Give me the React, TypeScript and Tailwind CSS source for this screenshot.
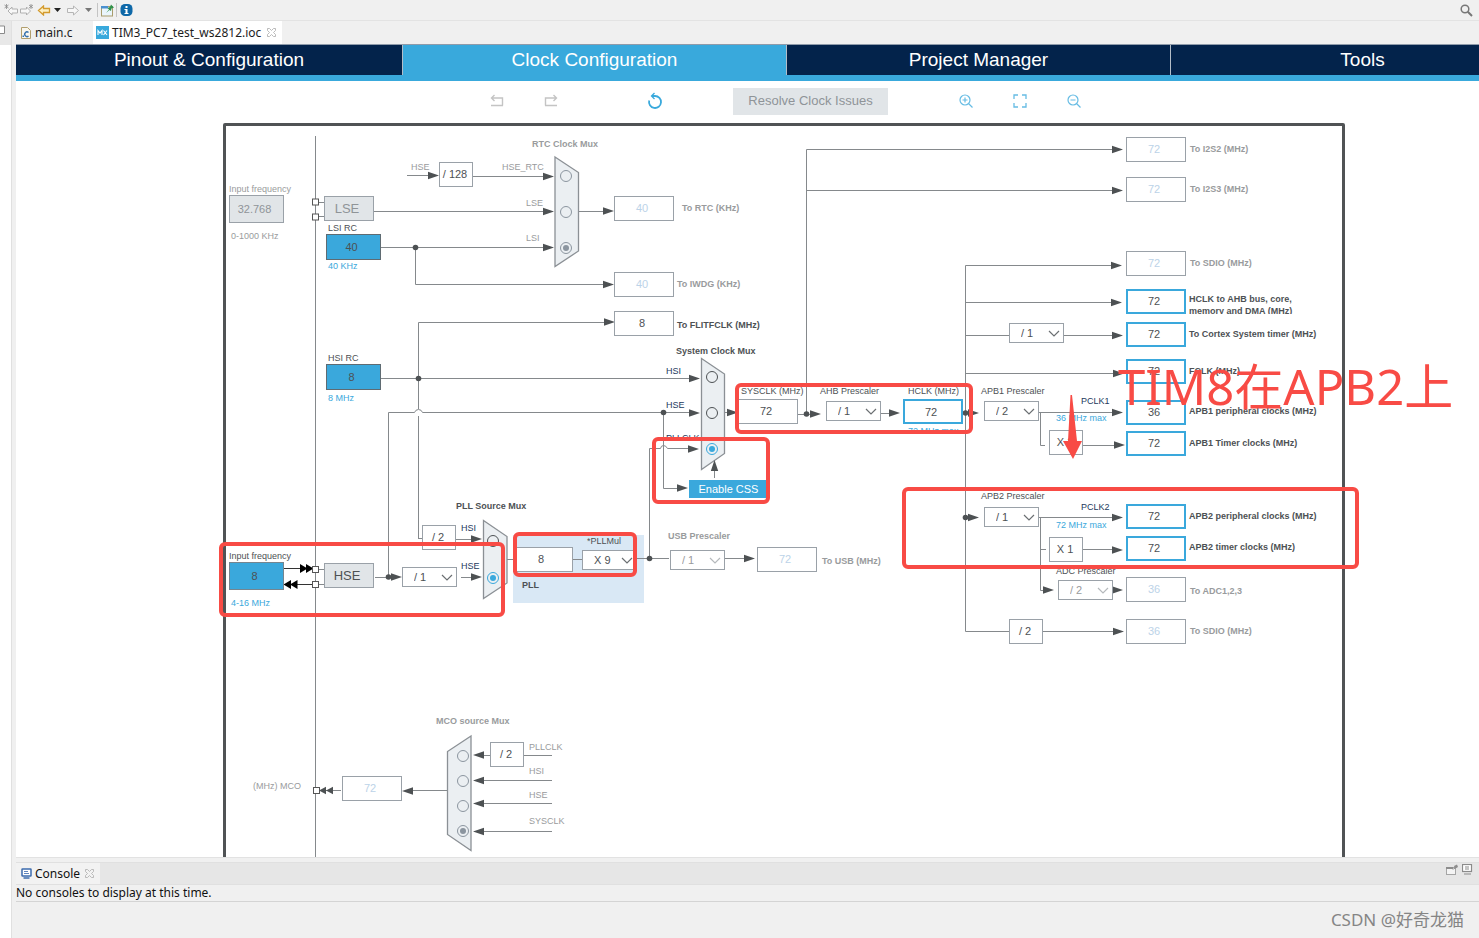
import type { ReactNode } from "react";

/* ---------- Clock sheet data (sheet coordinates) ---------- */

const ORIGIN = { x: 223, y: 123 };
const at = (x: number, y: number, w?: number, h?: number) => ({
  left: x - ORIGIN.x,
  top: y - ORIGIN.y,
  width: w,
  height: h,
});

type Tone = "dark" | "grey" | "navy" | "blue";
const toneClass: Record<Tone, string> = {
  dark: "text-[#4d5154]",
  grey: "text-[#999b9d]",
  navy: "text-[#23395d]",
  blue: "text-[#3aa8dc]",
};

type CaptionData = { x: number; y: number; text: string; tone: Tone; bold?: boolean; htmlFor?: string };

const captions: CaptionData[] = [
  { x: 411, y: 167, text: "HSE", tone: "grey" },
  { x: 502, y: 167, text: "HSE_RTC", tone: "grey", htmlFor: "rtc-hse" },
  { x: 526, y: 203, text: "LSE", tone: "grey", htmlFor: "rtc-lse" },
  { x: 526, y: 238, text: "LSI", tone: "grey", htmlFor: "rtc-lsi" },
  { x: 532, y: 144, text: "RTC Clock Mux", tone: "grey", bold: true },
  { x: 229, y: 189, text: "Input frequency", tone: "grey", htmlFor: "lse-freq" },
  { x: 231, y: 236, text: "0-1000 KHz", tone: "grey" },
  { x: 328, y: 228, text: "LSI RC", tone: "dark", htmlFor: "lsi-rc" },
  { x: 328, y: 266, text: "40 KHz", tone: "blue" },
  { x: 328, y: 358, text: "HSI RC", tone: "dark", htmlFor: "hsi-rc" },
  { x: 328, y: 398, text: "8 MHz", tone: "blue" },
  { x: 229, y: 556, text: "Input frequency", tone: "dark", htmlFor: "hse-freq" },
  { x: 231, y: 603, text: "4-16 MHz", tone: "blue" },
  { x: 682, y: 208, text: "To RTC (KHz)", tone: "grey", bold: true, htmlFor: "out-rtc" },
  { x: 677, y: 284, text: "To IWDG (KHz)", tone: "grey", bold: true, htmlFor: "out-iwdg" },
  { x: 677, y: 325, text: "To FLITFCLK (MHz)", tone: "dark", bold: true, htmlFor: "out-flit" },
  { x: 676, y: 351, text: "System Clock Mux", tone: "dark", bold: true },
  { x: 666, y: 371, text: "HSI", tone: "navy", htmlFor: "sys-hsi" },
  { x: 666, y: 405, text: "HSE", tone: "navy", htmlFor: "sys-hse" },
  { x: 666, y: 438, text: "PLLCLK", tone: "navy", htmlFor: "sys-pll" },
  { x: 741, y: 391, text: "SYSCLK (MHz)", tone: "dark", htmlFor: "sysclk" },
  { x: 820, y: 391, text: "AHB Prescaler", tone: "dark", htmlFor: "ahb" },
  { x: 908, y: 391, text: "HCLK (MHz)", tone: "dark", htmlFor: "hclk" },
  { x: 908, y: 431, text: "72 MHz max", tone: "blue" },
  { x: 981, y: 391, text: "APB1 Prescaler", tone: "dark", htmlFor: "apb1" },
  { x: 1081, y: 401, text: "PCLK1", tone: "navy" },
  { x: 1056, y: 418, text: "36 MHz max", tone: "blue" },
  { x: 981, y: 496, text: "APB2 Prescaler", tone: "dark", htmlFor: "apb2" },
  { x: 1081, y: 507, text: "PCLK2", tone: "navy" },
  { x: 1056, y: 525, text: "72 MHz max", tone: "blue" },
  { x: 1056, y: 571, text: "ADC Prescaler", tone: "dark", htmlFor: "adc" },
  { x: 456, y: 506, text: "PLL Source Mux", tone: "dark", bold: true },
  { x: 461, y: 528, text: "HSI", tone: "navy", htmlFor: "pll-hsi" },
  { x: 461, y: 566, text: "HSE", tone: "navy", htmlFor: "pll-hse" },
  { x: 587, y: 541, text: "*PLLMul", tone: "dark", htmlFor: "pllmul" },
  { x: 522, y: 585, text: "PLL", tone: "dark", bold: true },
  { x: 668, y: 536, text: "USB Prescaler", tone: "grey", bold: true, htmlFor: "usb" },
  { x: 822, y: 561, text: "To USB (MHz)", tone: "grey", bold: true, htmlFor: "out-usb" },
  { x: 1190, y: 149, text: "To I2S2 (MHz)", tone: "grey", bold: true, htmlFor: "out-i2s2" },
  { x: 1190, y: 189, text: "To I2S3 (MHz)", tone: "grey", bold: true, htmlFor: "out-i2s3" },
  { x: 1190, y: 263, text: "To SDIO (MHz)", tone: "grey", bold: true, htmlFor: "out-sdio" },
  { x: 1189, y: 334, text: "To Cortex System timer (MHz)", tone: "dark", bold: true, htmlFor: "out-cortex" },
  { x: 1189, y: 371, text: "FCLK (MHz)", tone: "dark", bold: true, htmlFor: "out-fclk" },
  { x: 1189, y: 411, text: "APB1 peripheral clocks (MHz)", tone: "dark", bold: true, htmlFor: "out-apb1" },
  { x: 1189, y: 443, text: "APB1 Timer clocks (MHz)", tone: "dark", bold: true, htmlFor: "out-apb1t" },
  { x: 1189, y: 516, text: "APB2 peripheral clocks (MHz)", tone: "dark", bold: true, htmlFor: "out-apb2" },
  { x: 1189, y: 547, text: "APB2 timer clocks (MHz)", tone: "dark", bold: true, htmlFor: "out-apb2t" },
  { x: 1190, y: 591, text: "To ADC1,2,3", tone: "grey", bold: true, htmlFor: "out-adc" },
  { x: 1190, y: 631, text: "To SDIO (MHz)", tone: "grey", bold: true, htmlFor: "out-sdio2" },
  { x: 436, y: 721, text: "MCO source Mux", tone: "grey", bold: true },
  { x: 529, y: 747, text: "PLLCLK", tone: "grey", htmlFor: "mco-pll" },
  { x: 529, y: 771, text: "HSI", tone: "grey", htmlFor: "mco-hsi" },
  { x: 529, y: 795, text: "HSE", tone: "grey", htmlFor: "mco-hse" },
  { x: 529, y: 821, text: "SYSCLK", tone: "grey", htmlFor: "mco-sys" },
  { x: 253, y: 786, text: "(MHz) MCO", tone: "grey", htmlFor: "out-mco" },
];

type Look = "active" | "plain" | "off";
const outputs: { id: string; x: number; y: number; value: string; look: Look }[] = [
  { id: "out-rtc", x: 614, y: 196, value: "40", look: "off" },
  { id: "out-iwdg", x: 614, y: 272, value: "40", look: "off" },
  { id: "out-flit", x: 614, y: 311, value: "8", look: "plain" },
  { id: "sysclk", x: 738, y: 399, value: "72", look: "plain" },
  { id: "pll-in", x: 513, y: 547, value: "8", look: "plain" },
  { id: "out-usb", x: 757, y: 547, value: "72", look: "off" },
  { id: "out-mco", x: 342, y: 776, value: "72", look: "off" },
  { id: "out-i2s2", x: 1126, y: 137, value: "72", look: "off" },
  { id: "out-i2s3", x: 1126, y: 177, value: "72", look: "off" },
  { id: "out-sdio", x: 1126, y: 251, value: "72", look: "off" },
  { id: "out-ahb", x: 1126, y: 289, value: "72", look: "active" },
  { id: "out-cortex", x: 1126, y: 322, value: "72", look: "active" },
  { id: "out-fclk", x: 1126, y: 359, value: "72", look: "active" },
  { id: "out-apb1", x: 1126, y: 400, value: "36", look: "active" },
  { id: "out-apb1t", x: 1126, y: 431, value: "72", look: "active" },
  { id: "out-apb2", x: 1126, y: 504, value: "72", look: "active" },
  { id: "out-apb2t", x: 1126, y: 536, value: "72", look: "active" },
  { id: "out-adc", x: 1126, y: 577, value: "36", look: "off" },
  { id: "out-sdio2", x: 1126, y: 619, value: "36", look: "off" },
];
const lookClass: Record<Look, string> = {
  active: "border-2 border-[#3aa8dc] text-[#4d5154]",
  plain: "border border-[#9aa1a8] text-[#4d5154]",
  off: "border border-[#9aa1a8] text-[#bcd3e8]",
};

const factors = [
  { x: 439, y: 162, text: "/ 128" },
  { x: 422, y: 525, text: "/ 2" },
  { x: 1049, y: 430, text: "X 2" },
  { x: 1049, y: 537, text: "X 1" },
  { x: 1009, y: 619, text: "/ 2" },
  { x: 490, y: 742, text: "/ 2" },
];

const selects = [
  { id: "hse-div", x: 402, y: 567, value: "/ 1", label: "HSE divider" },
  { id: "pllmul", x: 582, y: 550, value: "X 9", label: "PLL multiplier" },
  { id: "usb", x: 670, y: 550, value: "/ 1", label: "USB Prescaler", off: true },
  { id: "ahb", x: 826, y: 401, value: "/ 1", label: "AHB Prescaler" },
  { id: "apb1", x: 984, y: 401, value: "/ 2", label: "APB1 Prescaler" },
  { id: "apb2", x: 984, y: 507, value: "/ 1", label: "APB2 Prescaler" },
  { id: "adc", x: 1058, y: 580, value: "/ 2", label: "ADC Prescaler", off: true },
  { id: "cortex-div", x: 1009, y: 323, value: "/ 1", label: "Cortex timer prescaler" },
];

const radios = [
  { id: "rtc-hse", group: "rtc", x: 566, y: 176, off: true },
  { id: "rtc-lse", group: "rtc", x: 566, y: 212, off: true },
  { id: "rtc-lsi", group: "rtc", x: 566, y: 248, off: true, on: true },
  { id: "sys-hsi", group: "sys", x: 712, y: 377 },
  { id: "sys-hse", group: "sys", x: 712, y: 413 },
  { id: "sys-pll", group: "sys", x: 712, y: 449, on: true },
  { id: "pll-hsi", group: "pll", x: 493, y: 541 },
  { id: "pll-hse", group: "pll", x: 493, y: 578, on: true },
  { id: "mco-pll", group: "mco", x: 463, y: 756, off: true },
  { id: "mco-hsi", group: "mco", x: 463, y: 781, off: true },
  { id: "mco-hse", group: "mco", x: 463, y: 806, off: true },
  { id: "mco-sys", group: "mco", x: 463, y: 831, off: true, on: true },
];

const wires = [
  "M315.5 136V860",
  "M407 175.5H432M473 176.5H548M374 211.5H548M381 247.5H548",
  "M415.5 247.5V284.5H606M578 211.5H606",
  "M318 202.5H324M318 216.5H324M318 569.5H324M318 584.5H324",
  "M381 378.5H692M418.5 539V416M418.5 409V322.5H608M418.5 538.5H422",
  "M388.5 577V412.5H414.5Q415.5 409.5 418.5 409.5T422.5 412.5H692",
  "M663.5 412.5V488.5H680",
  "M649.5 558.5V448.5H660.5Q661 445.5 663.5 445.5T667.5 448.5H690",
  "M725 412.5H732M714.5 478V468",
  "M798 414.5H814M806.5 414.5V149.5H1115M806.5 190.5H1115",
  "M881 413.5H893M966 413.5H972M966 517.5H972",
  "M1115 265.5H965.5V631.5H1009M965.5 302.5H1115M965.5 335.5H1009M1064 335.5H1115M965.5 373.5H1115",
  "M1039 412.5H1115M1040.5 412.5V445.5H1045M1083 445.5H1117",
  "M1039 517.5H1115M1040.5 517.5V590.5H1046M1040 549.5H1046M1083 549.5H1115",
  "M1043 631.5H1117",
  "M375 577.5H396M461 577.5H474M456 539.5H474M507 559.5H514M573 559.5H582M637 558.5H669M725 558.5H747",
  "M448 790.5H410M341 790.5H326M490 755.5H481M524 755.5H552M552 780.5H481M552 803.5H481M552 831.5H481",
].join("");

const rightHeads: [number, number][] = [
  [439, 175.5], [554, 176.5], [554, 211.5], [554, 247.5], [614, 211], [614, 284.5], [615, 322],
  [700, 378.5], [700, 413], [699, 449], [688, 488], [738, 412.5], [821, 414], [900, 413],
  [979, 413], [979, 517.5], [1123, 149.5], [1123, 190.5], [1122, 265.5], [1122, 302.5], [1123, 335.5],
  [1124, 373.5], [1123, 412.5], [1125, 445], [1123, 517.5], [1123, 550], [1054, 590], [1123, 590],
  [1124, 631.5], [402, 577], [482, 539], [482, 577], [755, 558.5],
];
const leftHeads: [number, number][] = [
  [402, 791], [473, 755], [473, 780.5], [473, 803.5], [473, 831.5],
];
const dots: [number, number][] = [
  [415.5, 247.5], [418.5, 378.5], [663.5, 412.5], [649.5, 558.5], [806.5, 414], [965.5, 413],
  [965.5, 517.5], [388.5, 577],
];
const muxes = [
  "M555 157L578.5 172.5V251L555 266.5Z",
  "M701.5 358.5L724.5 374V453.5L701.5 469.5Z",
  "M483.5 520.5L507 536.5V583L483.5 598.5Z",
  "M471 736L447.500 751.500V834.500L471 850.500Z",
];
const pads: [number, number][] = [
  [315.5, 202], [315.5, 217], [315.5, 569.5], [315.5, 584.5], [316.5, 790.5],
];

const marks = [
  { x: 735, y: 383, w: 238, h: 51 },
  { x: 652, y: 437, w: 118, h: 67 },
  { x: 513, y: 532, w: 124, h: 45 },
  { x: 219, y: 542, w: 286, h: 75 },
  { x: 902, y: 487, w: 457, h: 82 },
];

/* ---------- Sheet parts ---------- */

function Wiring() {
  return (
    <svg
      aria-hidden="true"
      className="pointer-events-none absolute left-0 top-0"
      width={1256}
      height={740}
      viewBox="223 123 1256 740"
    >
      <rect x="513" y="535" width="131" height="68" fill="#d9e8f5" />
      <path d={wires} fill="none" stroke="#85898c" />
      {muxes.map((d) => (
        <path key={d} d={d} fill="#ebeff2" stroke="#8b9095" strokeWidth="1.3" />
      ))}
      <g fill="#4d5153">
        {rightHeads.map(([x, y]) => (
          <path key={`r${x}-${y}`} d={`M${x} ${y}l-11 -3.700v7.400z`} />
        ))}
        {leftHeads.map(([x, y]) => (
          <path key={`l${x}-${y}`} d={`M${x} ${y}l11 -3.700v7.400z`} />
        ))}
        <path d="M714.500 460l-3.700 11h7.400z" />
        {dots.map(([x, y]) => (
          <circle key={`d${x}-${y}`} cx={x} cy={y} r="2.800" />
        ))}
        <path d="M319 790.500l7 -3.700v7.400zM326 790.500l7 -3.700v7.400z" />
      </g>
      <path d="M284 568.500H302M296 584.500H313" stroke="#333" />
      <path d="M300 564l7.500 4.500-7.500 4.500zM306 564l7.500 4.500-7.500 4.500zM291 580l-7.500 4.500 7.500 4.500zM297.500 580l-7.500 4.500 7.500 4.500z" fill="#000" />
      {pads.map(([x, y]) => (
        <rect key={`p${y}`} x={x - 3} y={y - 3} width="6" height="6" fill="#fff" stroke="#555" />
      ))}
    </svg>
  );
}

function Caption({ x, y, text, tone, bold, htmlFor }: CaptionData) {
  const cls = `absolute whitespace-nowrap text-[9px] leading-3 ${toneClass[tone]} ${bold ? "font-bold" : ""}`;
  return htmlFor ? (
    <label htmlFor={htmlFor} className={cls} style={at(x, y - 6)}>{text}</label>
  ) : (
    <span className={cls} style={at(x, y - 6)}>{text}</span>
  );
}

function Prescaler({ id, x, y, value, label, off }: (typeof selects)[number]) {
  return (
    <div className="absolute flex h-5 w-[55px]" style={at(x, y)}>
      <select
        id={id}
        aria-label={label}
        defaultValue={value}
        disabled={off}
        className={`block h-5 w-full appearance-none border border-[#9aa1a8] bg-white pl-[11px] text-[11px] leading-4 opacity-100 ${off ? "text-[#999b9d]" : "text-[#4d5154]"}`}
      >
        <option>{value}</option>
      </select>
      <svg
        aria-hidden="true"
        className={`pointer-events-none absolute right-1 top-[7px] ${off ? "text-[#b5b9bc]" : "text-[#6b6f72]"}`}
        width="12"
        height="8"
        viewBox="0 0 12 8"
      >
        <path d="M1 1L6 6L11 1" fill="none" stroke="currentColor" strokeWidth="1.200" />
      </svg>
    </div>
  );
}

function ClockSheet() {
  return (
    <div className="relative h-[900px] w-[1122px] shrink-0 rounded-xs border-[3px] border-[#505355]">
      <div className="absolute -left-[3px] -top-[3px]">
        <Wiring />

        {factors.map((f) => (
          <span
            key={`${f.x}-${f.y}`}
            className="absolute flex h-[25px] w-[34px] items-center justify-center whitespace-nowrap border border-[#9aa1a8] bg-white pr-0.5 text-[11px] text-[#4d5154]"
            style={at(f.x, f.y)}
          >
            {f.text}
          </span>
        ))}

        {outputs.map((o) => (
          <output
            key={o.id}
            id={o.id}
            className={`absolute flex h-[25px] w-[60px] items-center justify-center bg-white pr-1 text-[11px] ${lookClass[o.look]}`}
            style={at(o.x, o.y)}
          >
            {o.value}
          </output>
        ))}

        <input
          id="lse-freq"
          disabled
          defaultValue="32.768"
          className="absolute h-7 w-[55px] border border-[#9aa1a8] bg-[#e1e5e8] pr-1 text-center text-[11px] text-[#8f9498]"
          style={at(229, 195)}
        />
        <input
          id="hse-freq"
          defaultValue="8"
          className="absolute h-7 w-[55px] border border-[#75858f] bg-[#3aa8dc] pr-1 text-center text-[11px] text-[#4d5154]"
          style={at(229, 562)}
        />
        <input
          id="hclk"
          defaultValue="72"
          className="absolute h-[25px] w-[60px] border-2 border-[#3aa8dc] bg-white pr-1 text-center text-[11px] text-[#4d5154]"
          style={at(903, 399)}
        />
        <output
          id="lsi-rc"
          className="absolute flex h-[26px] w-[55px] items-center justify-center border border-[#5f6b72] bg-[#3aa8dc] pr-1 text-[11px] text-[#4d5154]"
          style={at(326, 234)}
        >
          40
        </output>
        <output
          id="hsi-rc"
          className="absolute flex h-[26px] w-[55px] items-center justify-center border border-[#5f6b72] bg-[#3aa8dc] pr-1 text-[11px] text-[#4d5154]"
          style={at(326, 364)}
        >
          8
        </output>
        <span
          className="absolute flex h-[25px] w-[50px] items-center justify-center border border-[#9aa1a8] bg-[#e1e5e8] pr-1 text-[13px] text-[#8f9498]"
          style={at(324, 196)}
        >
          LSE
        </span>
        <span
          className="absolute flex h-[25px] w-[50px] items-center justify-center border border-[#9aa1a8] bg-[#e1e5e8] pr-1 text-[13px] text-[#4d5154]"
          style={at(324, 563)}
        >
          HSE
        </span>
        <button
          type="button"
          className="absolute h-[18px] w-[79px] bg-[#3aa8dc] text-[11px] leading-[18px] text-white"
          style={at(689, 480)}
        >
          Enable CSS
        </button>

        {selects.map((s) => (
          <Prescaler key={s.id} {...s} />
        ))}

        {radios.map((r) => (
          <input
            key={r.id}
            id={r.id}
            type="radio"
            name={r.group}
            defaultChecked={r.on}
            disabled={r.off}
            className={`absolute h-3 w-3 appearance-none rounded-full border bg-clip-content p-[2px] ${
              r.off
                ? "border-[#8b959f] checked:bg-[#8b959f]"
                : "border-[#4d5154] checked:border-[#3aa8dc] checked:bg-[#3aa8dc]"
            }`}
            style={at(r.x - 6, r.y - 6)}
          />
        ))}

        {captions.map((c) => (
          <Caption key={`${c.x}-${c.y}`} {...c} />
        ))}
        <label
          htmlFor="out-ahb"
          className="absolute h-[21px] w-32 overflow-hidden text-[9px] font-bold leading-3 text-[#4d5154]"
          style={at(1189, 293)}
        >
          HCLK to AHB bus, core, memory and DMA (MHz)
        </label>

        {marks.map((m) => (
          <div
            key={m.x}
            className="pointer-events-none absolute rounded-md border-4 border-[#f84b45]"
            style={at(m.x, m.y, m.w, m.h)}
          />
        ))}
        <svg aria-hidden="true" className="absolute" width="20" height="66" viewBox="0 0 20 66" style={at(1063, 394)}>
          <path d="M7.500 1H9L14 47H19L10 65L0 47H5Z" fill="#f84b45" />
        </svg>
        <p
          className="absolute whitespace-nowrap font-['Noto_Sans','Noto_Sans_CJK_SC',sans-serif] text-[49px] leading-[60px] text-[#f84b45]"
          style={at(1118, 356)}
        >
          TIM8在APB2上
        </p>
      </div>
    </div>
  );
}

/* ---------- Window chrome ---------- */

const ARROW_LEFT = "M1.500 5.500L6.500 1V3.500H12.500V7.500H6.500V10Z";
const ARROW_RIGHT = "M12.500 5.500L7.500 1V3.500H1.500V7.500H7.500V10Z";

function ToolButton({ label, children }: { label: string; children: ReactNode }) {
  return (
    <button type="button" aria-label={label} className="flex shrink-0 items-center justify-center">
      {children}
    </button>
  );
}

function MainToolbar() {
  return (
    <header className="flex h-[21px] shrink-0 items-center border-b border-[#e3e3e3] bg-[#f0f0f0] pl-1">
      <ToolButton label="Previous edit location">
        <svg width="15" height="12" viewBox="-1 0 15 12">
          <path d="M3 7L7 3V5H12.500V9H7V11Z" fill="#f7f7f7" stroke="#b0b0b0" />
          <path d="M1.500 0V5M-.5 1L3.500 4M3.500 1L-.5 4" stroke="#888" strokeWidth=".8" />
        </svg>
      </ToolButton>
      <ToolButton label="Next edit location">
        <svg width="15" height="12" viewBox="0 0 15 12">
          <path d="M11.500 7L7.500 3V5H1.500V9H7.500V11Z" fill="#f7f7f7" stroke="#b0b0b0" />
          <path d="M12 0V5M10 1L14 4M14 1L10 4" stroke="#888" strokeWidth=".8" />
        </svg>
      </ToolButton>
      <ToolButton label="Back">
        <svg width="17" height="11" viewBox="-3 0 17 11">
          <path d={ARROW_LEFT} fill="#fdf0c4" stroke="#d39a2d" strokeWidth="1.300" />
        </svg>
      </ToolButton>
      <ToolButton label="Back history">
        <svg width="14" height="4" viewBox="0 0 14 4"><path d="M3 0H10L6.500 4Z" fill="#222" /></svg>
      </ToolButton>
      <ToolButton label="Forward">
        <svg width="15" height="11" viewBox="-1 0 15 11">
          <path d={ARROW_RIGHT} fill="#f7f7f7" stroke="#b5b5b5" />
        </svg>
      </ToolButton>
      <ToolButton label="Forward history">
        <svg width="16" height="4" viewBox="0 0 16 4"><path d="M5 0H12L8.500 4Z" fill="#777" /></svg>
      </ToolButton>
      <span className="ml-px h-3.5 w-px bg-[#c4c4c4]" />
      <ToolButton label="Pin editor">
        <svg width="18" height="13" viewBox="0 0 18 13">
          <rect x="3.500" y="2.500" width="11" height="9.500" fill="#eaf5fc" stroke="#a89c6c" />
          <path d="M3 2H10V4.500H3Z" fill="#4a90d0" />
          <path d="M8 9L11 5.500L9.500 4L12 3L13 .5L16 3.500L13.500 4.500L13 7L11.500 6Z" fill="#31924a" />
        </svg>
      </ToolButton>
      <span className="h-3.5 w-px bg-[#c4c4c4]" />
      <ToolButton label="Information">
        <svg width="19" height="14" viewBox="0 0 19 14">
          <rect x="3.500" y="1" width="12" height="12" rx="4.500" fill="#0e68a8" />
          <path d="M8.500 3h2v2h-2zM7.500 6h3v4h1v1h-4v-1h1V7h-1z" fill="#fff" />
        </svg>
      </ToolButton>
      <button type="button" aria-label="Search" className="ml-auto mr-1.5">
        <svg width="13" height="13" viewBox="0 0 13 13" fill="none" stroke="#777">
          <circle cx="5" cy="5" r="3.800" strokeWidth="1.500" />
          <path d="M7.800 7.800L12 12" strokeWidth="2" />
        </svg>
      </button>
    </header>
  );
}

function CloseMark() {
  return (
    <svg width="9" height="9" viewBox="0 0 9 9" fill="none" stroke="#b3b3b3" strokeWidth=".9">
      <path d="M.5 .5H2.500L4.500 2.500L6.500 .5H8.500V2.500L6.500 4.500L8.500 6.500V8.500H6.500L4.500 6.500L2.500 8.500H.5V6.500L2.500 4.500L.5 2.500Z" />
    </svg>
  );
}

function EditorTabs() {
  return (
    <div className="flex h-[23px] shrink-0 items-stretch bg-[#f0f0f0] text-[12px] text-[#1c1c1c]">
      <button type="button" className="flex w-[77px] items-center gap-1 pl-[5px]">
        <svg width="10" height="12" viewBox="0 0 10 12">
          <path d="M.5 .5H6.500L9.500 3.500V11.500H.5Z" fill="#f8f6ee" stroke="#b29f6d" />
          <path d="M7.500 5.500A2.300 2.300 0 1 0 7.500 9" fill="none" stroke="#3571ae" strokeWidth="1.400" />
          <path d="M1.500 8.500h1.500v1.500h-1.500z" fill="#3571ae" />
        </svg>
        main.c
      </button>
      <div className="flex items-center bg-white pr-1.5">
        <button type="button" className="flex items-center gap-[3px] whitespace-nowrap pl-[3px]">
          <svg width="13" height="13" viewBox="0 0 13 13">
            <rect width="13" height="13" fill="#39a9dc" />
            <path d="M2 9V4.500L4 7L6 4.500V9M7.500 4.500L11 9M11 4.500L7.500 9" fill="none" stroke="#fff" strokeWidth="1.100" />
          </svg>
          TIM3_PC7_test_ws2812.ioc
        </button>
        <button type="button" aria-label="Close tab" className="ml-1.5">
          <CloseMark />
        </button>
      </div>
    </div>
  );
}

function SectionNav() {
  const tab = "h-[30px] w-96 shrink-0 border-r border-[#b4bdc8] text-center leading-[30px]";
  return (
    <nav className="flex shrink-0 overflow-hidden border-b-[6px] border-t border-b-[#39a9dc] border-t-[#8f9baa] font-['Liberation_Sans',Arial,sans-serif] text-[19px] text-white">
      <button type="button" className="h-[30px] w-[387px] shrink-0 border-r border-[#b4bdc8] bg-[#03234b] text-center leading-[30px]">
        Pinout &amp; Configuration
      </button>
      <button type="button" aria-current="page" className={`${tab} bg-[#39a9dc]`}>Clock Configuration</button>
      <button type="button" className={`${tab} bg-[#03234b]`}>Project Manager</button>
      <button type="button" className={`${tab} bg-[#03234b]`}>Tools</button>
    </nav>
  );
}

function ClockToolbar() {
  return (
    <div className="flex h-[42px] shrink-0 items-center pb-0.5 pl-[473px] font-['Liberation_Sans',Arial,sans-serif]">
      <ToolButton label="Undo">
        <svg width="16" height="16" viewBox="0 0 16 16" fill="none" stroke="#c4c4c4" strokeWidth="1.400">
          <path d="M2.500 5H13.500V12.500M5.500 2L2.500 5L5.500 8M2 12.500H14" />
        </svg>
      </ToolButton>
      <span className="w-[38px]" />
      <ToolButton label="Redo">
        <svg width="16" height="16" viewBox="0 0 16 16" fill="none" stroke="#c4c4c4" strokeWidth="1.400">
          <path d="M13.500 5H2.500V12.500M10.500 2L13.500 5L10.500 8M2 12.500H14" />
        </svg>
      </ToolButton>
      <span className="w-[88px]" />
      <ToolButton label="Reset">
        <svg width="16" height="18" viewBox="0 0 16 18" fill="none" stroke="#39a9dc" strokeWidth="1.800">
          <path d="M5 4H8A6 6 0 1 1 2.200 8.500" />
          <path d="M7.500 1L4.500 4L7.500 7" strokeWidth="1.300" />
        </svg>
      </ToolButton>
      <button type="button" disabled className="ml-[70px] h-[27px] w-[155px] bg-[#e1e5e8] text-[13px] text-[#8f9498]">
        Resolve Clock Issues
      </button>
      <span className="w-[70px]" />
      <ToolButton label="Zoom in">
        <svg width="16" height="16" viewBox="0 0 16 16" fill="none" stroke="#66bce4" strokeWidth="1.200">
          <circle cx="7" cy="7" r="5" />
          <path d="M10.500 10.500L14.500 14.500M7 4.500V9.500M4.500 7H9.500" />
        </svg>
      </ToolButton>
      <span className="w-[38px]" />
      <ToolButton label="Fit to window">
        <svg width="16" height="16" viewBox="0 0 16 16" fill="none" stroke="#66bce4" strokeWidth="1.300">
          <path d="M2 6V2H6M10 2H14V6M14 10V14H10M6 14H2V10" />
        </svg>
      </ToolButton>
      <span className="w-[38px]" />
      <ToolButton label="Zoom out">
        <svg width="16" height="16" viewBox="0 0 16 16" fill="none" stroke="#66bce4" strokeWidth="1.200">
          <circle cx="7" cy="7" r="5" />
          <path d="M10.500 10.500L14.500 14.500M4.500 7H9.500" />
        </svg>
      </ToolButton>
    </div>
  );
}

function ConsolePanel() {
  return (
    <section className="flex h-[81px] shrink-0 flex-col border-t border-[#e2e2e2] bg-[#f0f0f0] pt-1 text-[12px] text-[#111]">
      <div className="flex h-[23px] shrink-0 items-center border-y border-[#e0e0e0] bg-[#e6e6e6]">
        <div className="flex h-full items-center gap-[3px] bg-[#f2f2f2] pl-[5px] pr-1.5">
          <svg width="11" height="11" viewBox="0 0 11 11">
            <rect x="1" y="1" width="9" height="7" rx=".5" fill="#fff" stroke="#3d6cae" strokeWidth="1.500" />
            <path d="M3 3.500H7M3 5.500H8" stroke="#5f85bd" />
            <path d="M2.500 10H8.500" stroke="#3d6cae" strokeWidth="1.500" />
          </svg>
          <h2>Console</h2>
          <button type="button" aria-label="Close console" className="ml-0.5">
            <CloseMark />
          </button>
        </div>
        <div className="ml-auto flex items-center gap-1 pb-2 pr-1.5">
          <button type="button" aria-label="Pin console">
            <svg width="12" height="11" viewBox="0 0 12 11">
              <rect x=".5" y="3.500" width="9" height="7" fill="#f4f4f4" stroke="#a5a5a5" />
              <path d="M0 3H7V5H0ZM6 6L8.500 3.500L8 2L11 .5L12 3L9.500 4.500Z" fill="#8d8d8d" />
            </svg>
          </button>
          <button type="button" aria-label="Display selected console">
            <svg width="11" height="11" viewBox="0 0 11 11">
              <rect x=".5" y=".5" width="9" height="7" fill="#fff" stroke="#8b8b8b" strokeWidth="1.200" />
              <path d="M3 3H7M3 5H7M2 10H9" stroke="#8b8b8b" />
            </svg>
          </button>
        </div>
      </div>
      <p className="h-[17px] shrink-0 border-b border-[#d4d4d4] leading-4">No consoles to display at this time.</p>
      <p className="pr-[15px] pt-1 text-right font-['Noto_Sans','Noto_Sans_CJK_SC',sans-serif] text-[17px] leading-7 text-[#858585]">
        CSDN @好奇龙猫
      </p>
    </section>
  );
}

export default function App() {
  return (
    <div className="flex h-screen flex-col overflow-hidden bg-[#f0f0f0] font-['Noto_Sans','Open_Sans',sans-serif]">
      <MainToolbar />
      <div className="flex min-h-0 flex-1">
        <aside className="flex w-3 shrink-0 flex-col border-r border-[#e0e0e0] bg-white">
          <div className="flex h-6 items-start bg-[#e8e8e8] pt-1">
            <svg width="5" height="9" viewBox="0 0 5 9">
              <path d="M0 1H4.500V8.500H0" fill="#fff" stroke="#8a8a8a" />
            </svg>
          </div>
        </aside>
        <div className="ml-1 flex min-w-0 flex-1 flex-col">
          <EditorTabs />
          <main className="flex min-h-0 flex-1 flex-col overflow-hidden bg-white">
            <SectionNav />
            <ClockToolbar />
            <div className="flex min-h-0 flex-1 overflow-hidden pl-[207px] font-['Liberation_Sans',Arial,sans-serif]">
              <ClockSheet />
            </div>
          </main>
          <ConsolePanel />
        </div>
      </div>
    </div>
  );
}
